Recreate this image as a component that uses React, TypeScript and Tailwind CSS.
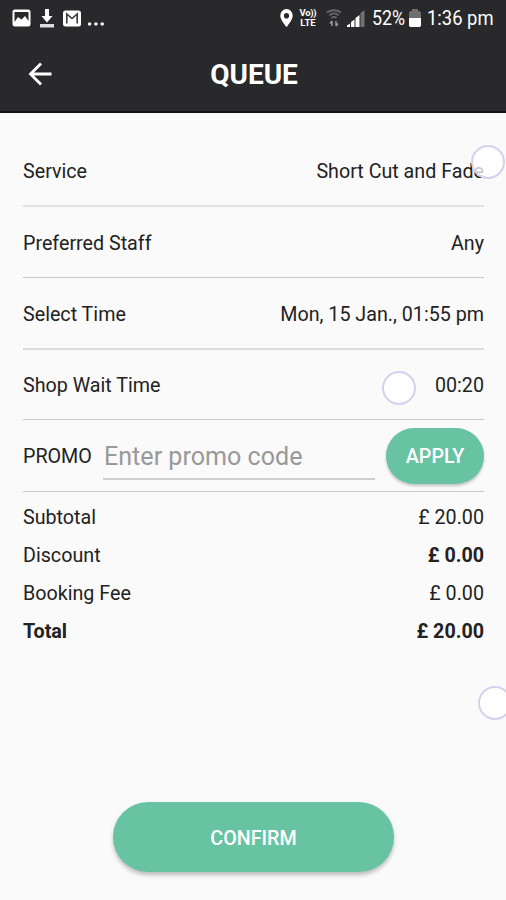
import { useState } from 'react';

const details = [
  { label: 'Service', value: 'Short Cut and Fade', className: 'h-[71px] border-b-2 border-[#e2e2e2]' },
  { label: 'Preferred Staff', value: 'Any', className: 'h-[71px] border-b border-[#c9c9c9]' },
  { label: 'Select Time', value: 'Mon, 15 Jan., 01:55 pm', className: 'h-[72px] border-b-2 border-[#dcdcdc]' },
  { label: 'Shop Wait Time', value: '00:20', className: 'h-[70px] border-b border-[#c9c9c9]' },
];

const summary = [
  { label: 'Subtotal', value: '£ 20.00', labelBold: false, valueBold: false },
  { label: 'Discount', value: '£ 0.00', labelBold: false, valueBold: true },
  { label: 'Booking Fee', value: '£ 0.00', labelBold: false, valueBold: false },
  { label: 'Total', value: '£ 20.00', labelBold: true, valueBold: true },
];

const StatusBar = () => (
  <div className="flex h-9 items-center justify-between pl-3 pr-3 text-white">
    <div className="flex items-center">
      <svg className="h-[18px] w-[19px]" viewBox="0 0 19 18">
        <rect x="0.5" y="0.5" width="18" height="17" rx="2.5" fill="#fff" />
        <path d="M2.500 3h14v9l-3.500-5-3.500 3.500L6 8l-3.500 5z" fill="#29292b" />
      </svg>
      <svg className="ml-2 h-[20px] w-[16px]" viewBox="0 0 16 20">
        <path d="M6 1h4v7h3.500L8 14.500 2.500 8H6z" fill="#fff" />
        <rect x="1" y="16" width="14" height="3.500" fill="#ddd" />
      </svg>
      <svg className="ml-2 h-[17px] w-[18px]" viewBox="0 0 18 17">
        <rect x="0" y="0.5" width="18" height="16" rx="2.5" fill="#fff" />
        <path d="M3.800 13.500V4L9 8.500 14.200 4v9.500" fill="none" stroke="#3a3a3c" strokeWidth="1.600" />
      </svg>
      <svg className="ml-[7px] mt-3 h-1 w-4" viewBox="0 0 16 4" fill="#fff">
        <rect x="0" y="0.5" width="3.200" height="3" rx="1" />
        <rect x="6.300" y="0.5" width="3.200" height="3" rx="1" />
        <rect x="12.600" y="0.5" width="3.200" height="3" rx="1" />
      </svg>
    </div>
    <div className="flex items-center">
      <svg className="h-[18px] w-[13px]" viewBox="0 0 14 18" preserveAspectRatio="none">
        <path
          d="M7 0a6.700 6.700 0 0 0-6.700 6.700C.3 11 7 18 7 18s6.700-7 6.700-11.300A6.700 6.700 0 0 0 7 0zm0 3.900a2.800 2.800 0 1 1 0 5.600 2.800 2.800 0 0 1 0-5.600z"
          fill="#fff"
          fillRule="evenodd"
        />
      </svg>
      <div className="ml-[6px] flex w-[18px] flex-col items-center text-[9.5px] font-bold leading-[10px]">
        <span className="-tracking-[0.3px]">Vo))</span>
        <span>LTE</span>
      </div>
      <svg className="ml-[9px] h-[18px] w-4" viewBox="0 0 16 18" fill="none" stroke="#68686a" strokeWidth="1.800">
        <path d="M1 3.500c4-3 10-3 14 0M3.300 6.300c2.800-2.500 6.600-2.500 9.400 0M5.500 9c1.500-1.400 3.500-1.400 5 0" />
        <path d="M6 12V17M4 14.500 6 12M10 12v5M12 14.500 10 17" stroke="#9a9a9c" strokeWidth="1.500" />
      </svg>
      <svg className="ml-[5px] h-[17px] w-[18px]" viewBox="0 0 18 17">
        <path d="M0 17v-1.500l3-2V17z" fill="#fff" />
        <path d="M4 17v-5l3.500-2.500V17z" fill="#fff" />
        <path d="M8.500 17V8l4-3v12z" fill="#fff" />
        <path d="M13.500 17V3L17.500 0v17z" fill="#707072" />
      </svg>
      <div className="ml-[7px] w-[34px] whitespace-nowrap text-xl leading-9">
        <span className="inline-block origin-left scale-x-[0.89]">52%</span>
      </div>
      <svg className="ml-[3px] mr-px h-[18px] w-3" viewBox="0 0 12 18">
        <path d="M3 0h6v2h1.500L12 3.500V9H0V3.500L1.500 2H3z" fill="#707072" />
        <path d="M0 9h12v7.500L11 18H1l-1-1.500z" fill="#fff" />
      </svg>
      <div className="ml-[5px] w-[67px] whitespace-nowrap text-xl leading-9">
        <span className="inline-block origin-left scale-x-[0.92]">1:36 pm</span>
      </div>
    </div>
  </div>
);

const TouchRing = ({ className }: { className: string }) => (
  <span
    className={`pointer-events-none absolute h-[34px] w-[34px] rounded-full border-2 border-[#d3d2ec] bg-white/75 ${className}`}
  />
);

export default function App() {
  const [promo, setPromo] = useState('');

  return (
    <div className="relative flex h-[900px] w-[506px] flex-col overflow-hidden bg-[#fafafa] font-['Roboto',sans-serif] text-[19.7px] text-[#222]">
      <header className="h-[113px] shrink-0 border-b-2 border-[#111113] bg-[#29292b]">
        <StatusBar />
        <div className="grid h-[76px] grid-cols-[1fr_auto_1fr] items-center pl-7 pr-[26px] text-white">
          <button aria-label="Back" className="w-6">
            <svg className="h-6 w-6" viewBox="0 0 24 24" fill="none" stroke="#fff" strokeWidth="2.800">
              <path d="M23.500 12H2.500M13 1.500 2.500 12 13 22.500" />
            </svg>
          </button>
          <h1 className="pt-[2px] text-[28px] font-bold">QUEUE</h1>
        </div>
      </header>

      <main className="flex flex-1 flex-col pl-[23px] pr-[22px] pt-[23px]">
        {details.map((row) => (
          <div key={row.label} className={`flex items-center justify-between pt-[3px] ${row.className}`}>
            <span>{row.label}</span>
            <span>{row.value}</span>
          </div>
        ))}

        <div className="flex h-[72px] items-center border-b border-[#c9c9c9]">
          <span className="w-[80px] pt-[3px]">PROMO</span>
          <input
            value={promo}
            onChange={(e) => setPromo(e.target.value)}
            placeholder="Enter promo code"
            className="h-[49px] w-[272px] border-b-2 border-[#cfcfcf] bg-transparent pl-px pt-[4px] text-[25.1px] outline-none placeholder:text-[#999]"
          />
          <button className="ml-[11px] h-[56px] w-[98px] rounded-full bg-[#68c3a3] pt-[3px] font-medium text-white shadow-[0_2px_3px_rgba(0,0,0,0.22)]">
            APPLY
          </button>
        </div>

        <div className="pt-[6px]">
          {summary.map((row) => (
            <div key={row.label} className="flex h-[38px] items-center justify-between pt-[2px]">
              <span className={row.labelBold ? 'font-bold' : ''}>{row.label}</span>
              <span className={row.valueBold ? 'font-bold' : ''}>{row.value}</span>
            </div>
          ))}
        </div>

        <button className="mb-[28px] ml-[90px] mt-auto h-[70px] w-[281px] rounded-full bg-[#68c3a3] pt-[4px] font-medium text-white shadow-[0_3px_4px_rgba(0,0,0,0.25)]">
          CONFIRM
        </button>
      </main>

      <TouchRing className="left-[471px] top-[145px]" />
      <TouchRing className="left-[382px] top-[371px]" />
      <TouchRing className="left-[478px] top-[686px]" />
    </div>
  );
}
